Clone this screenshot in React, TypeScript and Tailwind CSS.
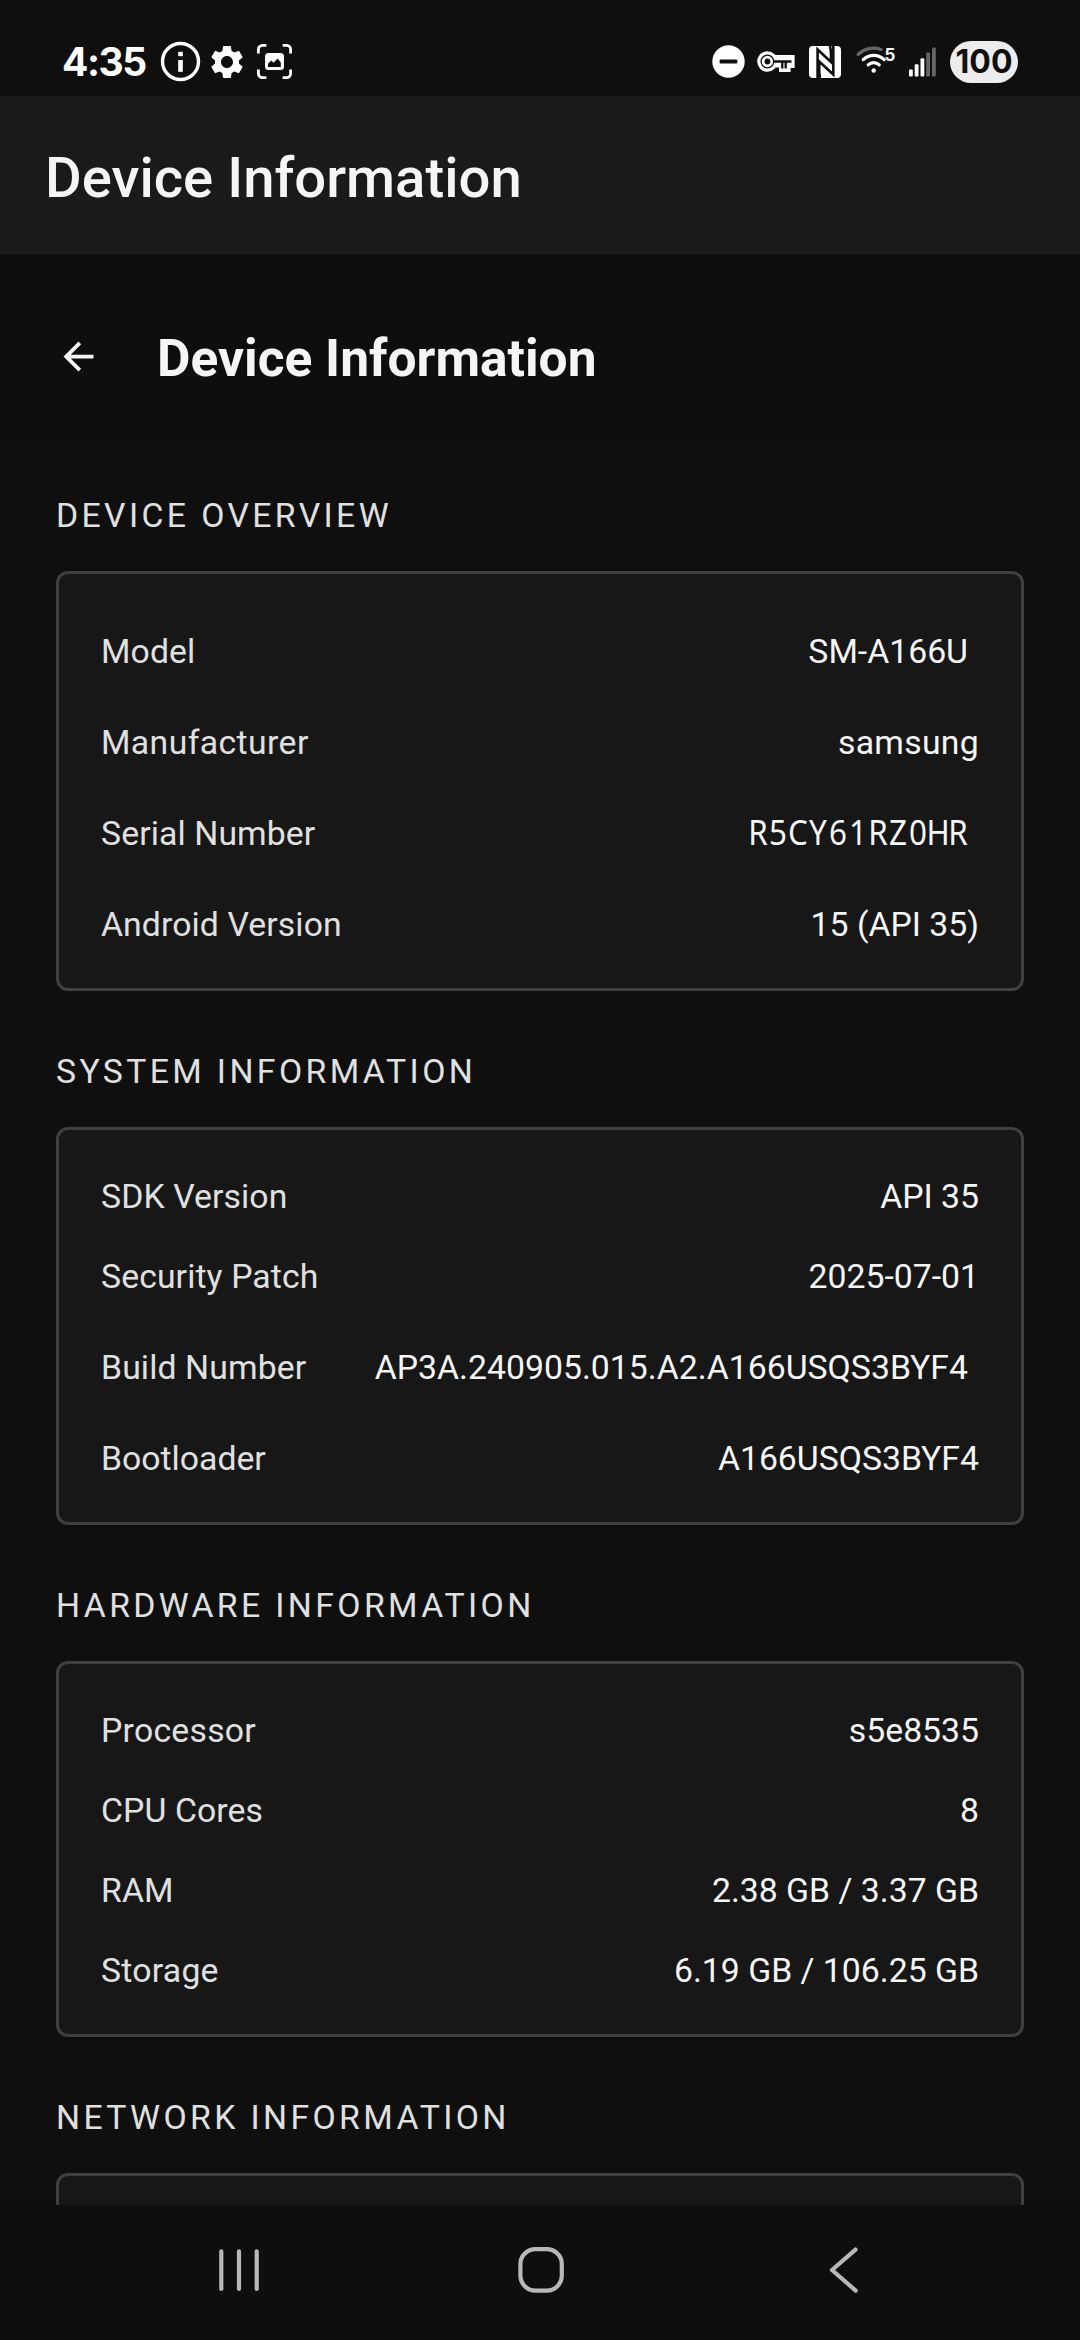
import { MdArrowBack, MdSettings } from "react-icons/md";

type Row = {
  label: string;
  value: string;
  copyable?: boolean;
  mono?: boolean;
  labelClass?: string;
  valueClass?: string;
};
type Section = { title: string; rows: Row[] };

const sections: Section[] = [
  {
    title: "DEVICE OVERVIEW",
    rows: [
      { label: "Model", value: "SM-A166U", copyable: true },
      { label: "Manufacturer", value: "samsung", labelClass: "tracking-[0.4px]", valueClass: "tracking-[0.3px]" },
      { label: "Serial Number", value: "R5CY61RZ0HR", copyable: true, mono: true },
      { label: "Android Version", value: "15 (API 35)" },
    ],
  },
  {
    title: "SYSTEM INFORMATION",
    rows: [
      { label: "SDK Version", value: "API 35" },
      { label: "Security Patch", value: "2025-07-01" },
      { label: "Build Number", value: "AP3A.240905.015.A2.A166USQS3BYF4", copyable: true, valueClass: "tracking-[0.02px]" },
      { label: "Bootloader", value: "A166USQS3BYF4", labelClass: "tracking-normal" },
    ],
  },
  {
    title: "HARDWARE INFORMATION",
    rows: [
      { label: "Processor", value: "s5e8535", labelClass: "tracking-[0.25px]" },
      { label: "CPU Cores", value: "8" },
      { label: "RAM", value: "2.38 GB / 3.37 GB" },
      { label: "Storage", value: "6.19 GB / 106.25 GB", labelClass: "tracking-[0.25px]" },
    ],
  },
  { title: "NETWORK INFORMATION", rows: [] },
];

function StatusBar() {
  return (
    <div className="flex h-24 shrink-0 items-center justify-between pt-[27px] pr-[62px] pl-[62px]">
      <div className="flex items-center">
        <span className="w-[98px] font-['Inter'] text-[39px] leading-none font-bold tracking-[-1.4px] text-white">4:35</span>
        <svg className="size-[41px]" viewBox="0 0 41 41" fill="none">
          <circle cx="20.5" cy="20.5" r="18" stroke="#fff" strokeWidth="3.4" />
          <rect x="18.2" y="10.8" width="4.6" height="4.4" fill="#fff" />
          <rect x="18.2" y="19" width="4.6" height="11.8" fill="#fff" />
        </svg>
        <MdSettings className="ml-[6px] size-10 text-white" />
        <svg className="ml-[10px] size-[35px]" viewBox="0 0 35 35" fill="none">
          <path d="M1.4 9.5V5.4a4 4 0 0 1 4-4h4M25.6 1.4h4a4 4 0 0 1 4 4v4.1M33.6 25.5v4.1a4 4 0 0 1-4 4h-4M9.4 33.6h-4a4 4 0 0 1-4-4v-4.1" stroke="#fff" strokeWidth="2.8" />
          <rect x="8" y="9" width="19" height="17" rx="3.5" fill="#fff" />
          <path d="M11 23v-3.2l3.2-3.2 2.4 2.2 4-4.400 3.200 4v4.600z" fill="#0f0f0f" />
        </svg>
      </div>
      <div className="flex items-center">
        <svg className="size-[33px]" viewBox="0 0 33 33">
          <circle cx="16.5" cy="16.5" r="16.2" fill="#fff" />
          <rect x="7.6" y="14.6" width="17.8" height="3.8" rx="1.2" fill="#0f0f0f" />
        </svg>
        <svg className="ml-3 h-[22px] w-[38px]" viewBox="0 0 38 22" fill="none">
          <path d="M16 4h21.600v13h-4v4H22v-4.500h-5z" fill="#fff" />
          <circle cx="10.400" cy="10.500" r="10.200" fill="#fff" />
          <circle cx="10.400" cy="10.500" r="6.300" stroke="#0f0f0f" strokeWidth="1.300" />
          <circle cx="10.400" cy="10.500" r="2.900" fill="#0f0f0f" />
          <path d="M16.500 10.500h18M28.700 10.500v7M25.300 10.500v7" stroke="#0f0f0f" strokeWidth="2.300" />
        </svg>
        <svg className="ml-[14px] size-8" viewBox="0 0 32 32" fill="none">
          <rect width="32" height="32" rx="4" fill="#fff" />
          <path d="M8.6 32V3.5L22 16V8.5C22 5 21.8 3 21 0" stroke="#0f0f0f" strokeWidth="2.6" />
          <path d="M11 32c-.7-3-.8-4.500-.8-8V15.500L24.300 28.500V0" stroke="#0f0f0f" strokeWidth="2.6" />
        </svg>
        <svg className="ml-[15px] h-10 w-10" viewBox="0 0 40 40" fill="none" strokeLinecap="round" strokeWidth="3.2">
          <circle cx="17.700" cy="28.500" r="2.200" fill="#fff" />
          <path d="M12.200 22.800a8 8 0 0 1 11 0" stroke="#fff" />
          <path d="M7.200 17.600a15 15 0 0 1 21 0" stroke="#fff" />
          <path d="M2.200 12.400a22 22 0 0 1 22.800-5" stroke="#666" />
          <text x="28.600" y="18.500" fill="#fff" stroke="none" fontSize="17" fontWeight="700" fontFamily="Inter">5</text>
        </svg>
        <svg className="ml-3 h-[30px] w-[29px]" viewBox="0 0 29 30">
          <rect x="1" y="22.500" width="3.800" height="7" rx="1" fill="#fff" />
          <rect x="6.700" y="17.200" width="3.800" height="12.300" rx="1" fill="#fff" />
          <rect x="12.500" y="11.200" width="3.800" height="18.300" rx="1" fill="#fff" />
          <rect x="18.200" y="5.500" width="3.800" height="24" rx="1" fill="#666" />
          <rect x="24" y=".5" width="3.800" height="29" rx="1" fill="#666" />
        </svg>
        <span className="ml-[13px] flex h-[42px] w-[68px] items-center justify-center rounded-full bg-[#ececec] font-['Inter'] text-[32px] leading-none font-bold text-[#0f0f0f]">100</span>
      </div>
    </div>
  );
}

function MonoText({ text }: { text: string }) {
  return (
    <span className="mb-[3px] flex font-['Noto_Sans',sans-serif]">
      {text.split("").map((ch, i) => (
        <span key={i} className="flex w-5 scale-x-[0.93] justify-center">
          {ch}
        </span>
      ))}
    </span>
  );
}

function InfoRow({ label, value, copyable, mono, labelClass = "tracking-[0.1px]", valueClass = "" }: Row) {
  return (
    <div className={`flex items-center justify-between pt-[3px] ${copyable ? "h-[102px]" : "h-20"}`}>
      <span className={labelClass}>{label}</span>
      <span className={`text-[#f5f5f5] ${copyable ? "pr-[11px]" : ""} ${valueClass}`}>
        {mono ? <MonoText text={value} /> : value}
      </span>
    </div>
  );
}

export default function App() {
  return (
    <div className="flex h-[2340px] w-[1080px] flex-col overflow-hidden bg-[#0f0f0f] font-['Roboto',sans-serif] text-[#f5f5f5]">
      <StatusBar />
      <header className="flex h-[158px] shrink-0 items-center bg-[#1a1a1a] pt-[6px] pl-[45px]">
        <h1 className="text-[56.25px] leading-[66px] font-medium">Device Information</h1>
      </header>
      <div className="flex h-[181px] shrink-0 items-center bg-[#0e0e0e] pl-14">
        <MdArrowBack className="mt-[23px] size-[45px]" />
        <h2 className="mt-[29px] ml-[56px] text-[51.5px] leading-[60px] font-bold">Device Information</h2>
      </div>
      <main className="flex min-h-0 flex-1 flex-col gap-[61px] overflow-hidden px-14 pt-[61px] text-[33.75px] leading-10 text-[#e0e0e0]">
        {sections.map((section) => (
          <section key={section.title} className="shrink-0">
            <h3 className="mb-[35px] tracking-[3.375px]">{section.title}</h3>
            <div className="min-h-[200px] rounded-[12px] border-[3px] border-[#404040] bg-[#171717] px-[42px] py-[25px]">
              {section.rows.map((row) => (
                <InfoRow key={row.label} {...row} />
              ))}
            </div>
          </section>
        ))}
      </main>
      <nav className="flex h-[135px] shrink-0 items-center bg-[#0e0e0e] pb-[5px] pl-[216px] text-[#b8b8b8]">
        <svg className="h-12 w-[46px]" viewBox="0 0 46 48" stroke="currentColor" strokeWidth="4.200" strokeLinecap="round">
          <path d="M5.300 5.300v37.600M23 5.300v37.600M40.700 5.300v37.600" />
        </svg>
        <svg className="ml-[255px] size-12" viewBox="0 0 48 48" fill="none" stroke="currentColor" strokeWidth="4.200">
          <rect x="3.400" y="3.200" width="41.400" height="41.400" rx="15" />
        </svg>
        <svg className="ml-[262px] h-12 w-8" viewBox="0 0 32 48" fill="none" stroke="currentColor" strokeWidth="4.200" strokeLinecap="round" strokeLinejoin="round">
          <path d="M28.500 3.600L5 24l23.700 20.600" />
        </svg>
      </nav>
    </div>
  );
}
